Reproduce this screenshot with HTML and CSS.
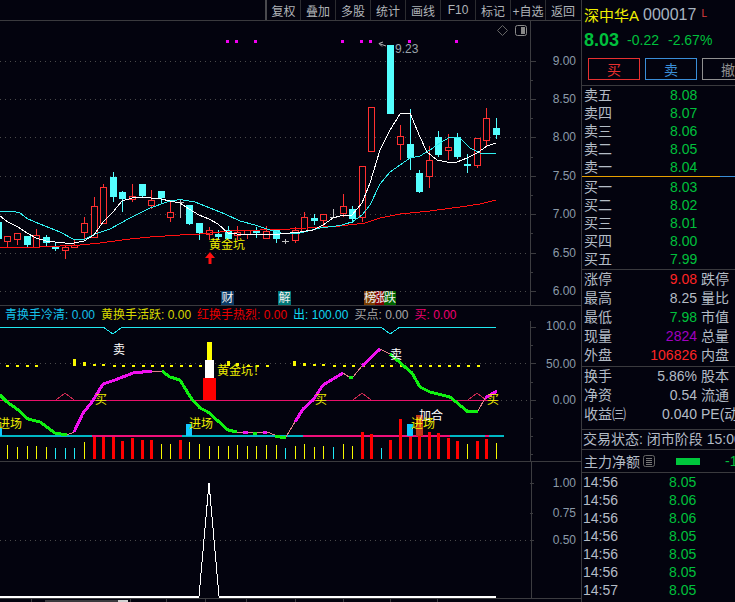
FILE: index.html
```html
<!DOCTYPE html>
<html lang="zh">
<head>
<meta charset="utf-8">
<title>深中华A 000017</title>
<link rel="stylesheet" href="styles.css">
</head>
<body>
<div class="app">
  <main class="charts">
    <nav class="toolbar">
      <span class="tool tool-first">复权</span><span class="tool">叠加</span><span class="tool">多股</span><span class="tool">统计</span><span class="tool">画线</span><span class="tool">F10</span><span class="tool">标记</span><span class="tool">+自选</span><span class="tool">返回</span>
    </nav>

    <svg class="panel panel-main" viewBox="0 21 581 284" width="581" height="284">
      <path class="grid" d="M0 61.5H530M0 99.5H530M0 137.5H530M0 176.5H530M0 214.5H530M0 253.5H530M0 291.5H530"/>
      <path class="axis" d="M530.5 21V305M530 61.5h6M530 80.5h3M530 99.5h6M530 118.5h3M530 137.5h6M530 157.5h3M530 176.5h6M530 195.5h3M530 214.5h6M530 233.5h3M530 253.5h6M530 272.5h3M530 291.5h6"/>
      <path class="magenta-dot" d="M226 40h3v3h-3zM235 40h3v3h-3zM254 40h3v3h-3zM341 40h3v3h-3zM360 40h3v3h-3zM369 40h3v3h-3zM408 40h3v3h-3zM455 40h3v3h-3z"/>

      <path class="wick-red" d="M7.5 241V247M17.5 239V245M36.5 229V235M65.5 245V247M65.5 250V259M74.5 240V245M84.5 217V223M84.5 232V239M94.5 197V206M103.5 184V187M132.5 184V196M132.5 199V202M151.5 190V200M151.5 205V209M170.5 202V212M170.5 217V222M209.5 227V230M209.5 234V240M237.5 226V232M237.5 235V240M247.5 234V239M266.5 226V231M266.5 238V239M295.5 227V230M295.5 240V243M304.5 212V217M304.5 231V232M323.5 220V226M343.5 194V206M343.5 213V217M362.5 217V222M400.5 125V136M400.5 144V160M429.5 146V160M429.5 176V188M448.5 134V147M448.5 150V160M477.5 165V168M486.5 108V118M486.5 140V146"/>
      <path class="body-red" d="M4.5 236.5h6v5h-6zM14.5 233.5h6v6h-6zM33.5 235.5h6v12h-6zM62.5 247.5h6v3h-6zM71.5 245.5h6v2h-6zM81.5 223.5h6v9h-6zM91.5 206.5h6v31h-6zM100.5 187.5h6v36h-6zM129.5 196.5h6v3h-6zM148.5 200.5h6v5h-6zM167.5 212.5h6v5h-6zM206.5 230.5h6v4h-6zM234.5 232.5h6v3h-6zM244.5 230.5h6v4h-6zM263.5 231.5h6v7h-6zM292.5 230.5h6v10h-6zM301.5 217.5h6v14h-6zM320.5 214.5h6v6h-6zM340.5 206.5h6v7h-6zM359.5 166.5h6v51h-6zM368.5 107.5h6v44h-6zM397.5 136.5h6v8h-6zM426.5 160.5h6v16h-6zM445.5 147.5h6v3h-6zM474.5 138.5h6v27h-6zM483.5 118.5h6v22h-6z"/>
      <path class="wick-cyan" d="M27.5 236V248M46.5 235V246M55.5 242V251M113.5 172V202M122.5 191V212M142.5 184V198M161.5 191V203M189.5 205V225M199.5 223V240M218.5 230V240M228.5 226V239M256.5 227V238M276.5 230V243M314.5 214V225M352.5 206V223M410.5 109V170M419.5 170V193M438.5 131V157M457.5 133V159M467.5 154V173M496.5 118V139"/>
      <path class="body-cyan" d="M0 222h2v17h-2zM24 236h7v9h-7zM43 237h7v6h-7zM52 247h7v2h-7zM110 177h7v20h-7zM119 192h7v7h-7zM139 184h7v12h-7zM158 191h7v7h-7zM186 205h7v19h-7zM196 223h7v10h-7zM215 234h7v3h-7zM225 230h7v9h-7zM253 231h7v2h-7zM273 230h7v9h-7zM311 218h7v3h-7zM349 209h7v10h-7zM387 45h7v69h-7zM407 144h7v14h-7zM416 173h7v19h-7zM435 137h7v18h-7zM454 137h7v20h-7zM464 164h7v2h-7zM493 128h7v7h-7z"/>
      <path class="doji" d="M180.5 200V218M177 202.5H184M285.5 239V244M282 241.5H289M333.5 209V218M330 217.5H337"/>

      <polyline class="ma-red" points="0,248 3,247 40,247 80,245 100,243 130,239 150,237 180,235 200,234 230,231 260,230 290,229 340,226 365,223 380,218 400,214 430,211 460,207 480,204 496,200"/>
      <polyline class="ma-cyan" points="0,211 12,211 20,213 28,219 40,224 50,228 60,232 73,239 85,239 95,234 110,229 130,218 150,208 170,201 180,199.5 195,202 210,208 225,214 240,221 255,225 270,230 285,234 300,233 320,228 340,225.5 352,222 362,215 370,205 380,184 390,172 400,165 410,158 420,156 430,150 440,143 450,137 460,138 470,148 480,153 496,153"/>
      <polyline class="ma-white" points="0,216 8,222 18,227 27,233 36,238 46,241 55,242 65,243 74,243 84,241 94,235 103,222 113,212 122,201 132,198 142,197 151,198 161,199 170,201 180,203 189,209 199,215 209,219 218,224 228,233 237,234 280,234 300,232 313,230 323,225 333,218 343,215 352,215 362,203 370,183 380,150 390,130 400,114 410,113 420,137 427,152 437,160 447,162 457,162 467,158 477,153 487,146 496,143"/>

      <path class="peak-arrow" d="M386 46L379 43.5M379 43.5L383 42M379 43.5L382 46.5"/>
      <text class="peak-label" x="395" y="53">9.23</text>
      <text class="signal-yellow" x="209" y="249">黄金坑</text>
      <path class="up-arrow" d="M210 252L215 258H211.500V264H208.500V258H205z"/>

      <path class="icon-line" d="M502.500 25.500L497.500 30.500L502.500 35.500L507.500 30.500z"/>
      <rect class="icon-box" x="515.500" y="25.500" width="11" height="10" rx="2"/>
      <rect class="icon-fill" x="521" y="27" width="4" height="7"/>

      <rect class="tag-blue" x="221" y="291" width="13" height="14"/>
      <rect class="tag-teal" x="278" y="291" width="13" height="14"/>
      <rect class="tag-brown" x="364" y="291" width="11" height="14"/>
      <rect class="tag-darkred" x="375" y="291" width="9" height="14"/>
      <rect class="tag-green" x="384" y="291" width="12" height="14"/>
      <text class="tag-text" x="221.500" y="302">财</text>
      <text class="tag-text" x="278.500" y="302">解</text>
      <text class="tag-text" x="364" y="302">榜</text>
      <text class="tag-text" x="373.500" y="302">涨</text>
      <text class="tag-text" x="384" y="302">跌</text>

      <text class="axis-label" x="576" y="64.500">9.00</text>
      <text class="axis-label" x="576" y="103">8.50</text>
      <text class="axis-label" x="576" y="141">8.00</text>
      <text class="axis-label" x="576" y="180">7.50</text>
      <text class="axis-label" x="576" y="218">7.00</text>
      <text class="axis-label" x="576" y="257">6.50</text>
      <text class="axis-label" x="576" y="294.500">6.00</text>
    </svg>

    <section class="indicator">
      <div class="legend">
        <span class="lg-cyan">青换手冷清: 0.00</span>
        <span class="lg-yellow">黄换手活跃: 0.00</span>
        <span class="lg-red">红换手热烈: 0.00</span>
        <span class="lg-aqua">出: 100.00</span>
        <span class="lg-gray">买点: 0.00</span>
        <span class="lg-pink">买: 0.00</span>
      </div>
      <svg class="panel" viewBox="0 321 581 140" width="581" height="140">
        <path class="grid" d="M0 363.500H530M496 400.500H530"/>
        <path class="axis" d="M530.500 321V461M530 327.500h6M530 345.500h3M530 363.500h6M530 382.500h3M530 400.500h6M530 418.500h3M530 436.500h3M530 454.500h3"/>
        <polyline class="top-line" points="0,327 103,327 113,334 122,327 381,327 390,334 400,327 496,327"/>
        <path class="zero-line" d="M0 400.500H496"/>
        <path class="mini-tri" d="M56 400L65 393L74 400M353 400L362 393L371 400M468 400L477 393L486 400"/>

        <path class="dash-yellow" d="M6 365h3v2h-3zM16 365h3v2h-3zM26 365h3v2h-3zM35 365h3v2h-3zM113 365h3v2h-3zM122 365h3v2h-3zM132 365h3v2h-3zM142 365h3v2h-3zM151 365h3v2h-3zM161 365h3v2h-3zM170 365h3v2h-3zM180 365h3v2h-3zM189 365h3v2h-3zM199 365h3v2h-3zM247 365h3v2h-3zM256 365h3v2h-3zM266 365h3v2h-3zM333 365h3v2h-3zM343 365h3v2h-3zM352 365h3v2h-3zM362 365h3v2h-3zM371 365h3v2h-3zM381 365h3v2h-3zM390 365h3v2h-3zM400 365h3v2h-3zM410 365h3v2h-3zM419 365h3v2h-3zM429 365h3v2h-3zM438 365h3v2h-3zM448 365h3v2h-3zM457 365h3v2h-3zM467 365h3v2h-3zM477 365h3v2h-3z"/>
        <path class="dash-yellow" d="M73 359h3v7h-3zM83 362h3v4h-3zM93 364h3v2h-3zM102 364h3v2h-3zM227 361h3v5h-3zM236 363h3v3h-3zM293 361h3v5h-3zM303 363h3v3h-3zM313 364h3v2h-3zM322 364h3v2h-3z"/>

        <rect class="bar-yellow" x="207" y="342" width="5" height="18"/>
        <rect class="bar-white" x="205" y="360" width="9" height="19"/>
        <rect class="bar-red" x="203" y="378" width="13" height="22"/>

        <path class="base-teal" d="M0 436H92M182 436H303M450 436H485M489 436H504"/>
        <path class="base-pink" d="M92 436H182M303 436H450M485 436H489"/>

        <path class="thin-pink" d="M67 435L74 432M152 371L162 371M237 432L243 432M248 432L253 433M257 433L263 432M267 432L275 435M286 437L295 422M343 373L349 377M353 377L362 366M380 349L390 354M478 411L485 398"/>
        <polyline class="curve-green" points="0,395 7,402 17,409 28,419 40,422 55,433 67,435"/>
        <polyline class="curve-magenta" points="74,432 83,413 92,402 103,384 115,380 133,373 152,371"/>
        <polyline class="curve-green" points="162,371 170,377 180,380 191,398 200,408 208,412 228,430 237,432"/>
        <path class="curve-magenta" d="M243 432H248M263 432H267"/>
        <path class="curve-green" d="M253 433H257M349 377H353"/>
        <polyline class="curve-green" points="275,436 280,437 286,437"/>
        <polyline class="curve-magenta" points="295,422 303,409 313,400 323,385 343,373"/>
        <polyline class="curve-magenta" points="362,366 380,349"/>
        <polyline class="curve-green" points="390,354 412,373 420,387 430,392 450,397 467,411 478,411"/>
        <polyline class="curve-magenta" points="485,398 497,391"/>

        <rect class="block-cyan" x="0" y="428" width="2" height="8"/>
        <rect class="block-cyan" x="186" y="424" width="6" height="12"/>
        <rect class="block-cyan" x="407" y="424" width="6" height="12"/>

        <path class="vol-yellow" d="M7.500 445V459M17.500 447V459M27.500 446V459M36.500 446V459M46.500 447V459M84.500 442V459M161.500 444V459M170.500 444V459M189.500 442V459M199.500 444V459M209.500 446V459M218.500 446V459M228.500 446V459M237.500 445V459M247.500 446V459M256.500 446V459M266.500 445V459M276.500 445V459M295.500 446V459M304.500 444V459M314.500 447V459M323.500 446V459M343.500 444V459M352.500 446V459M467.500 444V459M496.500 443V459"/>
        <path class="vol-cyan" d="M55.500 448V459M65.500 448V459M74.500 448V459M285.500 448V459M333.500 447V459M381.500 448V459"/>
        <path class="vol-red" d="M93 437h3v22h-3zM102 437h3v22h-3zM112 437h3v22h-3zM121 441h3v18h-3zM131 438h3v21h-3zM141 440h3v19h-3zM150 440h3v19h-3zM179 440h3v19h-3zM361 432h3v27h-3zM370 434h3v25h-3zM389 440h3v19h-3zM399 419h3v40h-3zM409 437h3v22h-3zM418 432h3v27h-3zM428 432h3v27h-3zM437 433h3v26h-3zM447 438h3v21h-3zM456 441h3v18h-3zM476 441h3v18h-3zM485 439h3v20h-3z"/>
        <rect class="block-orange" x="416" y="415" width="7" height="21"/>

        <text class="signal-white" x="113" y="354">卖</text>
        <text class="signal-white" x="390" y="359">卖</text>
        <text class="signal-white" x="419" y="420">加合</text>
        <text class="signal-yellow" x="95" y="404">买</text>
        <text class="signal-yellow" x="315" y="404">买</text>
        <text class="signal-yellow" x="487" y="404">买</text>
        <text class="signal-yellow" x="-2" y="428">进场</text>
        <text class="signal-yellow" x="189" y="428">进场</text>
        <text class="signal-yellow" x="411" y="428">进场</text>
        <text class="signal-yellow" x="217" y="375">黄金坑！</text>

        <text class="axis-label" x="576" y="330">100.0</text>
        <text class="axis-label" x="576" y="367.500">50.00</text>
        <text class="axis-label" x="576" y="403.500">0.00</text>
      </svg>
    </section>

    <svg class="panel panel-lower" viewBox="0 462 581 140" width="581" height="140">
      <path class="grid" d="M0 540.500H530"/>
      <path class="axis" d="M531.500 462V598M530 483.500h4M530 513.500h3M530 540.500h4"/>
      <polyline class="white-line" points="199,596 209,483 219,596"/>
      <path class="white-base" d="M0 597H199M219 597H496"/>
      <text class="axis-label label-small" x="576" y="487">1.00</text>
      <text class="axis-label label-small" x="576" y="517">0.75</text>
      <text class="axis-label label-small" x="576" y="544">0.50</text>
      <path class="axis" d="M0 598.500H581M31 599V602M130 599V602M166 599V602M205 599V602M246 599V602M295 599V602M343 599V602M390 599V602M437 599V602"/>
      <rect class="scroll" x="45" y="600" width="73" height="2"/>
      <rect class="scroll-thumb" x="118" y="600" width="10" height="2"/>
    </svg>
  </main>

  <aside class="quote">
    <header class="q-head">
      <div class="q-title"><span class="q-name">深中华A</span><span class="q-code">000017</span><span class="q-mark">L</span></div>
      <div class="q-price"><b class="q-last">8.03</b><span>-0.22</span><span>-2.67%</span></div>
      <div class="q-btns"><span class="btn btn-buy">买</span><span class="btn btn-sell">卖</span><span class="btn btn-cancel">撤</span></div>
    </header>

    <section class="book book-sell">
      <div class="row-book"><span>卖五</span><span class="green">8.08</span></div>
      <div class="row-book"><span>卖四</span><span class="green">8.07</span></div>
      <div class="row-book"><span>卖三</span><span class="green">8.06</span></div>
      <div class="row-book"><span>卖二</span><span class="green">8.05</span></div>
      <div class="row-book"><span>卖一</span><span class="green">8.04</span></div>
    </section>
    <div class="balance"></div>
    <section class="book book-buy">
      <div class="row-book"><span>买一</span><span class="green">8.03</span></div>
      <div class="row-book"><span>买二</span><span class="green">8.02</span></div>
      <div class="row-book"><span>买三</span><span class="green">8.01</span></div>
      <div class="row-book"><span>买四</span><span class="green">8.00</span></div>
      <div class="row-book"><span>买五</span><span class="green">7.99</span></div>
    </section>

    <section class="stats">
      <div class="row-stat"><span>涨停</span><span class="red">9.08</span><span>跌停</span></div>
      <div class="row-stat"><span>最高</span><span>8.25</span><span>量比</span></div>
      <div class="row-stat"><span>最低</span><span class="green">7.98</span><span>市值</span></div>
      <div class="row-stat"><span>现量</span><span class="purple">2824</span><span>总量</span></div>
      <div class="row-stat"><span>外盘</span><span class="red">106826</span><span>内盘</span></div>
    </section>
    <section class="stats stats-b">
      <div class="row-stat"><span>换手</span><span>5.86%</span><span>股本</span></div>
      <div class="row-stat"><span>净资</span><span>0.54</span><span>流通</span></div>
      <div class="row-stat"><span>收益㈢</span><span>0.040</span><span>PE(动)</span></div>
    </section>
    <div class="status">交易状态: 闭市阶段 15:00</div>
    <div class="flow">
      <span>主力净额</span>
      <svg class="flow-icon" viewBox="0 0 12 12" width="12" height="12"><rect class="flow-box" x="0.500" y="0.500" width="11" height="11" rx="2"/><path class="flow-lines" d="M3 3.500H9M3 5.500H9M3 7.500H9M3 9.500H9"/></svg>
      <i class="flow-bar"></i>
      <span class="green flow-val">-1</span>
    </div>
    <section class="ticks">
      <div class="row-tick"><span>14:56</span><span class="green">8.05</span></div>
      <div class="row-tick"><span>14:56</span><span class="green">8.06</span></div>
      <div class="row-tick"><span>14:56</span><span class="green">8.06</span></div>
      <div class="row-tick"><span>14:56</span><span class="green">8.05</span></div>
      <div class="row-tick"><span>14:56</span><span class="green">8.05</span></div>
      <div class="row-tick"><span>14:56</span><span class="green">8.05</span></div>
      <div class="row-tick"><span>14:57</span><span class="green">8.05</span></div>
    </section>
  </aside>
</div>
</body>
</html>
```

FILE: styles.css
```css
* { box-sizing: border-box; }
html, body { margin: 0; padding: 0; background: #03030e; }
body { font-family: "Liberation Sans", "Noto Sans CJK SC", sans-serif; color: #b4bcc6; overflow: hidden; }
.app { display: grid; grid-template-columns: 581px 154px; width: 735px; height: 602px; overflow: hidden; }

/* left side */
.charts { display: flex; flex-direction: column; width: 581px; height: 602px; overflow: hidden; }
.toolbar { display: flex; justify-content: flex-end; height: 21px; flex: none; border-bottom: 1px solid #3a3a3e; padding-right: 1px; }
.tool { width: 35px; height: 20px; display: flex; align-items: center; justify-content: center; font-size: 12px; white-space: nowrap; color: #b0b4b8; border-left: 1px solid #2c2c30; overflow: hidden; }
.tool-first { border-left: 2px solid #4a4a4e; }
.panel { display: block; flex: none; }
.panel-main { height: 284px; }
.indicator { flex: none; height: 157px; border-top: 1px solid #3a3a3e; border-bottom: 1px solid #3a3a3e; overflow: hidden; }
.legend { display: flex; gap: 6px; height: 15px; padding-left: 5px; align-items: center; font-size: 12px; white-space: nowrap; overflow: hidden; }
.lg-cyan { color: #16c0e8; }
.lg-yellow { color: #d8d800; }
.lg-red { color: #e80000; }
.lg-aqua { color: #10d8f0; }
.lg-gray { color: #a8a8a8; }
.lg-pink { color: #f00070; }

svg text { font-family: "Liberation Sans", "Noto Sans CJK SC", sans-serif; font-size: 12px; }
.grid { fill: none; stroke: #4a4a4a; stroke-width: 1; stroke-dasharray: 1 4; shape-rendering: crispEdges; }
.axis { fill: none; stroke: #3c3c40; stroke-width: 1; shape-rendering: crispEdges; }
.axis-label { fill: #8b9aa8; text-anchor: end; }
.magenta-dot { fill: #f000f0; shape-rendering: crispEdges; }
.wick-red { fill: none; stroke: #ff3030; shape-rendering: crispEdges; }
.body-red { fill: #03030e; stroke: #ff3030; shape-rendering: crispEdges; }
.wick-cyan { fill: none; stroke: #54ffff; shape-rendering: crispEdges; }
.body-cyan { fill: #54ffff; shape-rendering: crispEdges; }
.doji { fill: none; stroke: #c0c0c0; shape-rendering: crispEdges; }
.ma-red, .ma-cyan, .ma-white { fill: none; stroke-width: 1; shape-rendering: crispEdges; }
.ma-red { stroke: #ff1010; }
.ma-cyan { stroke: #30f0f0; }
.ma-white { stroke: #ffffff; }
.peak-arrow { fill: none; stroke: #b0b0b0; }
.peak-label { fill: #9aa4ac; }
.signal-yellow { fill: #f0f000; }
.signal-white { fill: #ffffff; }
.up-arrow { fill: #ff1010; }
.icon-line { fill: none; stroke: #666; }
.icon-box { fill: none; stroke: #888; }
.icon-fill { fill: #888; }
.tag-blue { fill: #0a3a66; }
.tag-teal { fill: #007878; }
.tag-brown { fill: #7a3c00; }
.tag-darkred { fill: #800000; }
.tag-green { fill: #006400; }
.tag-text { fill: #f0f0f0; }

.top-line { fill: none; stroke: #20e8f0; shape-rendering: crispEdges; }
.zero-line { fill: none; stroke: #e8106a; shape-rendering: crispEdges; }
.mini-tri { fill: none; stroke: #c82850; shape-rendering: crispEdges; }
.dash-yellow { fill: #f8f800; shape-rendering: crispEdges; }
.bar-yellow { fill: #ffff00; }
.bar-white { fill: #ffffff; }
.bar-red { fill: #ff0000; }
.base-teal { fill: none; stroke: #00b8c4; stroke-width: 2; shape-rendering: crispEdges; }
.base-pink { fill: none; stroke: #f0107a; stroke-width: 2; shape-rendering: crispEdges; }
.thin-pink { fill: none; stroke: #e08088; shape-rendering: crispEdges; }
.curve-green { fill: none; stroke: #10f010; stroke-width: 3; shape-rendering: crispEdges; }
.curve-magenta { fill: none; stroke: #f010f0; stroke-width: 3; shape-rendering: crispEdges; }
.block-cyan { fill: #10c8ff; }
.block-orange { fill: #c03818; }
.vol-yellow { fill: none; stroke: #f8f800; shape-rendering: crispEdges; }
.vol-cyan { fill: none; stroke: #20e8f8; shape-rendering: crispEdges; }
.vol-red { fill: #ff0000; shape-rendering: crispEdges; }
.white-line { fill: none; stroke: #ffffff; stroke-width: 1; shape-rendering: crispEdges; }
.white-base { fill: none; stroke: #ffffff; stroke-width: 2; shape-rendering: crispEdges; }
.scroll { fill: #3a3a3e; }
.scroll-thumb { fill: #d0d0d0; }

/* right side */
.quote { width: 154px; height: 602px; border-left: 1px solid #3a3a3e; overflow: hidden; font-size: 14px; white-space: nowrap; }
.green { color: #00c03c; }
.red { color: #ff2424; }
.purple { color: #a000c0; }
.q-head { height: 86px; border-bottom: 1px solid #3a3a3e; }
.q-title { display: flex; align-items: center; height: 29px; padding-left: 2px; }
.q-name { color: #f0f000; font-size: 15px; }
.q-code { color: #a8b4c0; font-size: 16px; margin-left: 4px; }
.q-mark { color: #e04040; font-size: 10px; margin-left: 5px; align-self: flex-start; margin-top: 8px; }
.q-price { display: flex; align-items: center; gap: 9px; height: 22px; padding-left: 2px; color: #00c03c; }
.q-last { font-size: 18px; margin-right: -1px; }
.q-btns { display: flex; gap: 5px; margin-top: 7px; margin-left: 6px; }
.btn { flex: none; width: 52px; height: 22px; display: flex; align-items: center; justify-content: center; font-size: 14px; border: 1px solid; }
.btn-buy { border-color: #e83030; color: #e83030; }
.btn-sell { border-color: #3a8ed8; color: #3a8ed8; }
.btn-cancel { border-color: #909090; color: #909090; }
.book { padding-left: 2px; }
.book-sell { height: 90px; }
.book-buy { height: 93px; padding-top: 1px; border-bottom: 1px solid #3a3a3e; }
.balance { height: 1px; background: linear-gradient(90deg, #e8a000 0, #e8a000 138px, #3a8ed8 138px, #3a8ed8 100%); }
.row-book { display: grid; grid-template-columns: 86px 28px; height: 18px; line-height: 18px; }
.stats { padding-left: 2px; height: 97px; border-bottom: 1px solid #3a3a3e; }
.stats-b { height: 63px; }
.row-stat { display: grid; grid-template-columns: 40px 73px 60px; column-gap: 0; height: 19px; line-height: 19px; }
.row-stat span:nth-child(2) { text-align: right; }
.row-stat span:nth-child(3) { margin-left: 4px; }
.status { height: 20px; line-height: 19px; padding-left: 1px; border-bottom: 1px solid #3a3a3e; }
.flow { display: flex; align-items: center; height: 23px; padding-left: 2px; border-bottom: 1px solid #3a3a3e; }
.flow-icon { margin-left: 3px; flex: none; }
.flow-box { fill: none; stroke: #666; }
.flow-lines { stroke: #777; shape-rendering: crispEdges; }
.flow-bar { width: 24px; height: 7px; background: #00c83c; margin-left: 21px; flex: none; }
.flow-val { margin-left: 25px; }
.ticks { padding-left: 1px; }
.row-tick { display: grid; grid-template-columns: 86px 28px; height: 18px; line-height: 18px; }
```
